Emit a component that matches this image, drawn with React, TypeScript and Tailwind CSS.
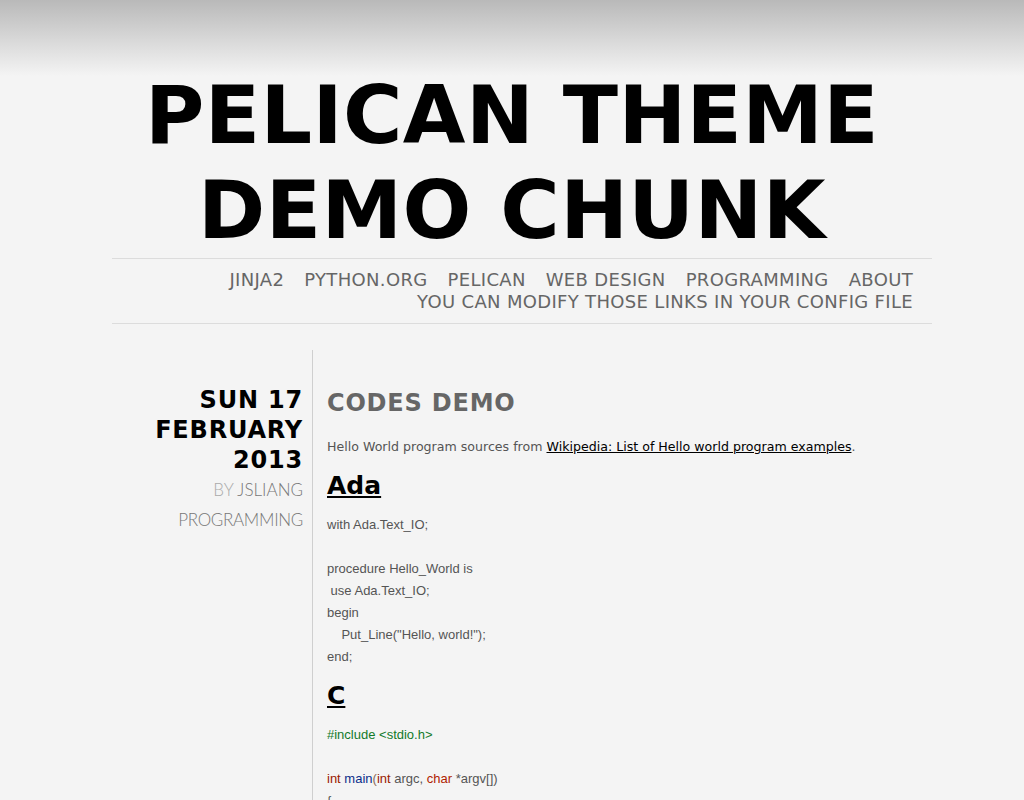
const navLinks = ['Jinja2', 'Python.org', 'Pelican', 'Web Design', 'Programming', 'About']

const adaCode = [
  'with Ada.Text_IO;',
  '',
  'procedure Hello_World is',
  ' use Ada.Text_IO;',
  'begin',
  '    Put_Line("Hello, world!");',
  'end;',
]

export default function App() {
  return (
    <div className="min-h-screen bg-[#f4f4f4] bg-[linear-gradient(to_bottom,#b9b9b9_0px,#f4f4f4_76px)] bg-no-repeat font-['DejaVu_Sans',sans-serif]">
      <div className="w-[840px] mx-auto pb-10">
        {/* Site title */}
        <h1 className="pt-[68px] text-center text-[81px] leading-[95px] font-bold uppercase tracking-[0.4px] text-black">
          Pelican Theme Demo Chunk
        </h1>

        {/* Menu */}
        <div className="ml-5 w-[820px] border-t border-b border-[#dcdcdc] pt-[10px] pb-[10px] pr-[19px]">
          <nav className="flex flex-wrap justify-end gap-x-[20px] text-[18px] leading-[22px] uppercase tracking-[0.33px] text-[#666]">
            {navLinks.map((l) => (
              <a key={l} href="#">
                {l}
              </a>
            ))}
            <a href="#" className="w-full text-right">
              You can modify those links in your config file
            </a>
          </nav>
        </div>

        {/* Article */}
        <div className="flex mt-[26px]">
          <div className="w-[220px] shrink-0 pt-[35px] pr-[9px] text-right">
            <div className="text-[24px] leading-[30px] font-bold uppercase tracking-[0.8px] text-black">
              Sun 17 February 2013
            </div>
            <div className="font-['Lato',sans-serif] font-light text-[17px] leading-[30px] uppercase">
              <div className="text-[#aaa]">
                By <a href="#" className="text-[#777]">jsliang</a>
              </div>
              <div>
                <a href="#" className="text-[#777] tracking-[-0.3px]">Programming</a>
              </div>
            </div>
          </div>

          <div className="flex-1 border-l border-[#cfcfcf] pl-[14px] pt-[38px]">
            <h2 className="text-[24px] leading-[30px] font-bold uppercase tracking-[0.8px] text-[#666]">
              Codes Demo
            </h2>
            <p className="mt-[19px] text-[12.6px] leading-[20px] text-[#555]">
              Hello World program sources from{' '}
              <a href="#" className="underline text-black">
                Wikipedia: List of Hello world program examples
              </a>
              .
            </p>

            <h3 className="mt-[14px] text-[25px] leading-[30px] font-bold text-black">
              <a href="#" className="underline decoration-2 underline-offset-2">Ada</a>
            </h3>
            <pre className="mt-[13px] font-['Liberation_Sans',Arial,sans-serif] text-[13px] leading-[22px] text-[#555] whitespace-pre">
              {adaCode.join('\n')}
            </pre>

            <h3 className="mt-[13px] text-[25px] leading-[30px] font-bold text-black">
              <a href="#" className="underline decoration-2 underline-offset-2">C</a>
            </h3>
            <pre className="mt-[13px] font-['Liberation_Sans',Arial,sans-serif] text-[13px] leading-[22px] text-[#555] whitespace-pre">
              <span className="text-[#127a2a]">#include &lt;stdio.h&gt;</span>
              {'\n\n'}
              <span className="text-[#9a2000]">int</span>{' '}
              <span className="text-[#0b2f8a]">main</span>
              <span className="text-[#8a6a5a]">(</span>
              <span className="text-[#9a2000]">int</span> argc, <span className="text-[#b02200]">char</span>{' '}
              *argv[])
              {'\n{\n    printf("Hello, world!\\n");\n    '}
              <span className="text-[#9a2000]">return</span> 0;
              {'\n}'}
            </pre>
          </div>
        </div>
      </div>
    </div>
  )
}
